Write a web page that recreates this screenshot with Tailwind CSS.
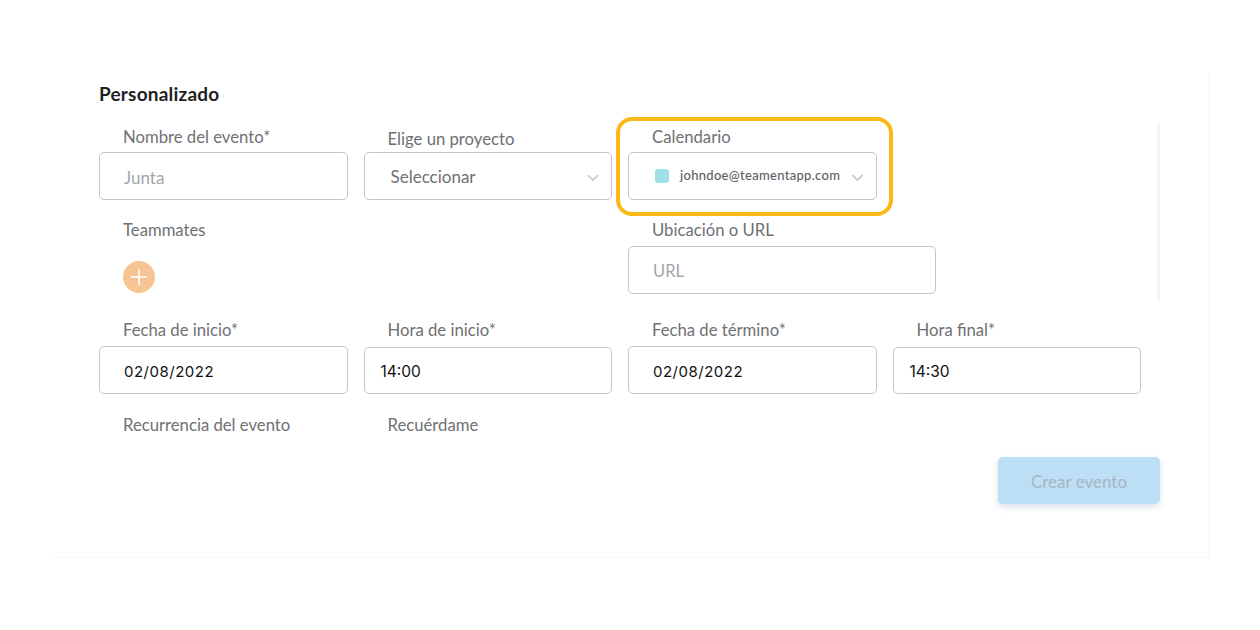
<!DOCTYPE html>
<html lang="es">
<head>
  <meta charset="UTF-8">
  <title>Personalizado</title>
  <script src="https://cdn.jsdelivr.net/npm/@tailwindcss/browser@4"></script>
</head>
<body class="bg-white font-['Lato',sans-serif] text-[#707074]">
  <div class="w-[1260px] h-[630px] overflow-hidden pt-[72px] pl-[50px]">
    <div class="relative w-[1159px] h-[486px] border-r border-b border-[#f8f8f8] pl-[49px] pt-[10px]">
      <h2 class="text-[19px] leading-6 font-bold tracking-[0.2px] text-[#1f1f22]">Personalizado</h2>

      <!-- scrollbar -->
      <div class="absolute left-[1107px] top-[52px] w-[3px] h-[176px] bg-[#f3f3f3]"></div>

      <div class="grid grid-cols-[248.5px_248.5px_248.5px_248.5px] gap-x-[16px] mt-[19px]">
        <!-- row 1 -->
        <div class="h-[93px]">
          <label class="block pl-6 text-[16.7px] leading-6">Nombre del evento*</label>
          <div class="mt-[3px] h-[48px] border-[1.5px] border-[#c6c6c8] rounded-[5px] pl-6 pt-[4px] flex items-center text-[17px] text-[#a3a6ab]">Junta</div>
        </div>
        <div class="h-[93px]">
          <label class="block pl-6 pt-[2px] text-[16.7px] leading-6">Elige un proyecto</label>
          <div class="mt-[1px] h-[48px] border-[1.5px] border-[#c6c6c8] rounded-[5px] pl-[26px] pr-3 pt-[2px] flex items-center justify-between text-[17px]">
            Seleccionar
            <svg class="w-[12px] h-[7px]" viewBox="0 0 14 8" fill="none" stroke="#c4c6c9" stroke-width="1.8"><path d="M1 1l6 6 6-6"/></svg>
          </div>
        </div>
        <div class="relative h-[93px]">
          <div class="absolute -left-[12px] -top-[8px] w-[277px] h-[99px] border-[4px] border-[#fbb917] rounded-[16px]"></div>
          <label class="block pl-6 text-[16.7px] leading-6">Calendario</label>
          <div class="mt-[3px] h-[48px] border-[1.5px] border-[#c6c6c8] rounded-[5px] pl-[26px] pr-3 flex items-center text-[13px] font-medium tracking-[0.3px] text-[#5e5e63]">
            <span class="w-[14px] h-[14px] rounded-[3px] bg-[#9fe0e8] mr-[11px]"></span>
            johndoe@teamentapp.com
            <svg class="ml-auto w-[13px] h-[7px] mt-[2px]" viewBox="0 0 14 8" fill="none" stroke="#c4c6c9" stroke-width="1.8"><path d="M1 1l6 6 6-6"/></svg>
          </div>
        </div>
        <div></div>

        <!-- row 2 -->
        <div class="h-[100px]">
          <label class="block pl-6 text-[16.7px] leading-6">Teammates</label>
          <div class="ml-6 mt-[19px] w-8 h-8 rounded-full bg-[#f7c593] flex items-center justify-center">
            <svg class="w-[18px] h-[18px]" viewBox="0 0 18 18" stroke="#fff" stroke-width="1.6"><path d="M9 1v16M1 9h16"/></svg>
          </div>
        </div>
        <div></div>
        <div class="col-span-2 h-[100px]">
          <label class="block pl-6 text-[16.7px] leading-6">Ubicación o URL</label>
          <div class="mt-[4px] w-[308px] h-[47.5px] border-[1.5px] border-[#c6c6c8] rounded-[5px] pl-6 pt-[4px] flex items-center text-[16.5px] text-[#a3a6ab]">URL</div>
        </div>

        <!-- row 3 -->
        <div class="h-[95px]">
          <label class="block pl-6 text-[16.7px] leading-6">Fecha de inicio*</label>
          <div class="mt-[4px] h-[48px] border-[1.5px] border-[#c6c6c8] rounded-[5px] pl-6 pt-[4px] flex items-center font-['Inter',sans-serif] text-[15px] tracking-[0.5px] text-[#111]">02/08/2022</div>
        </div>
        <div class="h-[95px]">
          <label class="block pl-6 text-[16.7px] leading-6">Hora de inicio*</label>
          <div class="mt-[5px] h-[47px] border-[1.5px] border-[#c6c6c8] rounded-[5px] pl-4 pt-[2px] flex items-center font-['Inter',sans-serif] text-[15.5px] text-[#111]">14:00</div>
        </div>
        <div class="h-[95px]">
          <label class="block pl-6 text-[16.7px] leading-6">Fecha de término*</label>
          <div class="mt-[4px] h-[48px] border-[1.5px] border-[#c6c6c8] rounded-[5px] pl-6 pt-[4px] flex items-center font-['Inter',sans-serif] text-[15px] tracking-[0.5px] text-[#111]">02/08/2022</div>
        </div>
        <div class="h-[95px]">
          <label class="block pl-6 text-[16.7px] leading-6">Hora final*</label>
          <div class="mt-[5px] h-[47px] border-[1.5px] border-[#c6c6c8] rounded-[5px] pl-4 pt-[2px] flex items-center font-['Inter',sans-serif] text-[15.5px] text-[#111]">14:30</div>
        </div>

        <!-- row 4 -->
        <label class="block pl-6 text-[16.7px] leading-6">Recurrencia del evento</label>
        <label class="block pl-6 text-[16.7px] leading-6">Recuérdame</label>
      </div>

      <div class="absolute left-[948px] top-[385px] w-[162px] h-[47px] rounded-[5px] bg-[#bcdff5] shadow-[0_3px_6px_rgba(150,170,200,0.35)] pt-[2px] flex items-center justify-center text-[17px] text-[#a8b5c1]">Crear evento</div>
    </div>
  </div>
</body>
</html>
